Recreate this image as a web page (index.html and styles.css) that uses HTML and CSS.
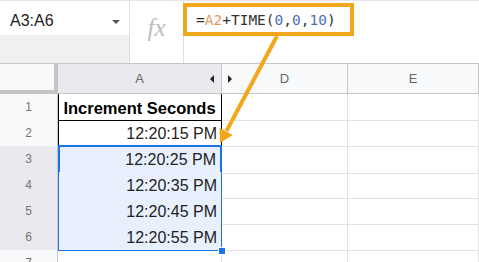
FILE: index.html
```html
<!DOCTYPE html>
<html lang="en">
<head>
    <meta charset="UTF-8">
    <title>Increment Seconds</title>
    <link rel="stylesheet" href="styles.css">
</head>
<body>
    <div class="toolbar">
        <div class="namebox">
            <div class="namebox-top">
                <span class="range">A3:A6</span>
                <span class="caret"></span>
            </div>
            <div class="namebox-bottom"></div>
        </div>
        <div class="fx">fx</div>
        <div class="formula">
            <div class="formula-box">=<span class="ref">A2</span>+TIME(<span class="num">0</span>,<span class="num">0</span>,<span class="num">10</span>)</div>
        </div>
    </div>

    <div class="sheet">
        <div class="row head">
            <div class="rh corner"></div>
            <div class="ch col-a">A<span class="hide-l"></span></div>
            <div class="ch col-d"><span class="hide-r"></span>D</div>
            <div class="ch">E</div>
        </div>
        <div class="row">
            <div class="rh">1</div>
            <div class="cell a title">Increment Seconds</div>
            <div class="cell"></div>
            <div class="cell"></div>
        </div>
        <div class="row">
            <div class="rh">2</div>
            <div class="cell a time">12:20:15 PM</div>
            <div class="cell"></div>
            <div class="cell"></div>
        </div>
        <div class="row">
            <div class="rh picked">3</div>
            <div class="cell a time sel active">12:20:25 PM</div>
            <div class="cell"></div>
            <div class="cell"></div>
        </div>
        <div class="row">
            <div class="rh picked">4</div>
            <div class="cell a time sel">12:20:35 PM</div>
            <div class="cell"></div>
            <div class="cell"></div>
        </div>
        <div class="row">
            <div class="rh picked">5</div>
            <div class="cell a time sel">12:20:45 PM</div>
            <div class="cell"></div>
            <div class="cell"></div>
        </div>
        <div class="row">
            <div class="rh picked">6</div>
            <div class="cell a time sel last">12:20:55 PM<span class="handle"></span></div>
            <div class="cell"></div>
            <div class="cell"></div>
        </div>
        <div class="row">
            <div class="rh">7</div>
            <div class="cell"></div>
            <div class="cell"></div>
            <div class="cell"></div>
        </div>
    </div>

    <!-- callout arrow from the formula to A3 -->
    <svg class="callout" width="479" height="262" viewBox="0 0 479 262">
        <line x1="277" y1="36" x2="226.5" y2="131" stroke="#f2a81d" stroke-width="4"/>
        <polygon points="220,143 232.8,135 219.6,127.8" fill="#f2a81d"/>
    </svg>
</body>
</html>
```

FILE: styles.css
```css
* {
    box-sizing: border-box;
}
body {
    margin: 0;
    width: 479px;
    height: 262px;
    overflow: hidden;
    background: #fff;
    font-family: "Liberation Sans", Arial, sans-serif;
    position: relative;
}

/* formula bar */
.toolbar {
    display: flex;
    height: 64px;
    border-top: 1px solid #e6e6e6;
    border-bottom: 1px solid #c7c7c7;
}
.namebox {
    width: 130px;
    display: flex;
    flex-direction: column;
    border-right: 1px solid #e0e0e0;
}
.namebox-top {
    height: 34px;
    display: flex;
    align-items: flex-start;
    padding: 5px 9px 0 10px;
}
.range {
    font-size: 16px;
    line-height: 29px;
    color: #222;
}
.caret {
    margin-left: auto;
    margin-top: 14px;
    border-left: 4px solid transparent;
    border-right: 4px solid transparent;
    border-top: 4px solid #555;
}
.namebox-bottom {
    flex: 1;
    background: #f0f0f0;
}
.fx {
    width: 54px;
    border-right: 1px solid #e0e0e0;
    text-align: center;
    font-family: "Liberation Serif", "Times New Roman", serif;
    font-style: italic;
    font-size: 25px;
    line-height: 25px;
    padding-top: 14px;
    color: #bdbdbd;
}
.formula {
    flex: 1;
    padding-top: 2px;
    margin-left: -1px;
}
.formula-box {
    width: 171px;
    height: 33px;
    border: 4px solid #f2a81d;
    padding: 2px 0 0 9px;
    font-family: "DejaVu Sans Mono", monospace;
    font-size: 14.5px;
    line-height: 23px;
    color: #333;
    white-space: nowrap;
    background: #fff;
}
.ref {
    color: #e59a5f;
}
.num {
    color: #4d70b3;
}

/* grid */
.row {
    display: grid;
    grid-template-columns: 58px 164px 126px 131px;
    height: 26px;
}
.row.head {
    height: 30px;
}
.rh {
    background: #f8f9fa;
    border-right: 1px solid #c7c7c7;
    border-bottom: 1px solid #c7c7c7;
    color: #757575;
    font-size: 12px;
    text-align: center;
    line-height: 26px;
}
.rh.picked {
    background: #e8eaed;
}
.corner {
    background: #f8f9fa;
    border-right: 4px solid #c4c4c4;
    border-bottom: 4px solid #c4c4c4;
}
.ch {
    position: relative;
    background: #f8f9fa;
    border-right: 1px solid #c7c7c7;
    border-bottom: 1px solid #c7c7c7;
    color: #666;
    font-size: 13px;
    display: flex;
    align-items: center;
    justify-content: center;
}
.ch.col-a {
    background: #e8eaed;
}
.hide-l, .hide-r {
    position: absolute;
    top: 11px;
    border-top: 4px solid transparent;
    border-bottom: 4px solid transparent;
}
.hide-l {
    right: 7px;
    border-right: 4px solid #222;
}
.hide-r {
    left: 6px;
    border-left: 4px solid #222;
}
.cell {
    border-right: 1px solid #e2e2e2;
    border-bottom: 1px solid #e2e2e2;
    font-size: 16px;
    color: #222;
}
.cell.a {
    border-right-color: #000;
    border-bottom-color: #000;
    box-shadow: inset 1px 0 0 #000;
}
.title {
    font-weight: bold;
    font-size: 16.5px;
    text-align: center;
    padding-top: 2px;
    line-height: 24px;
    color: #000;
}
.time {
    text-align: right;
    padding: 2px 4px 0 0;
    line-height: 24px;
}
.cell.sel {
    position: relative;
    background: #e8f0fe;
    border-right-color: #1a73e8;
    box-shadow: inset 1px 0 0 #1a73e8;
}
.cell.sel.active {
    border-bottom: 2px solid #1a73e8;
    border-right: 2px solid #1a73e8;
    box-shadow: inset 2px 0 0 #1a73e8, inset 0 2px 0 #1a73e8;
    margin-top: -1px;
    padding-top: 3px;
}
.cell.sel.last {
    border-bottom-color: #1a73e8;
}
.handle {
    position: absolute;
    right: -5px;
    bottom: -5px;
    width: 8px;
    height: 8px;
    background: #1a73e8;
    border: 1px solid #fff;
}

.callout {
    position: absolute;
    left: 0;
    top: 0;
    pointer-events: none;
}
```
